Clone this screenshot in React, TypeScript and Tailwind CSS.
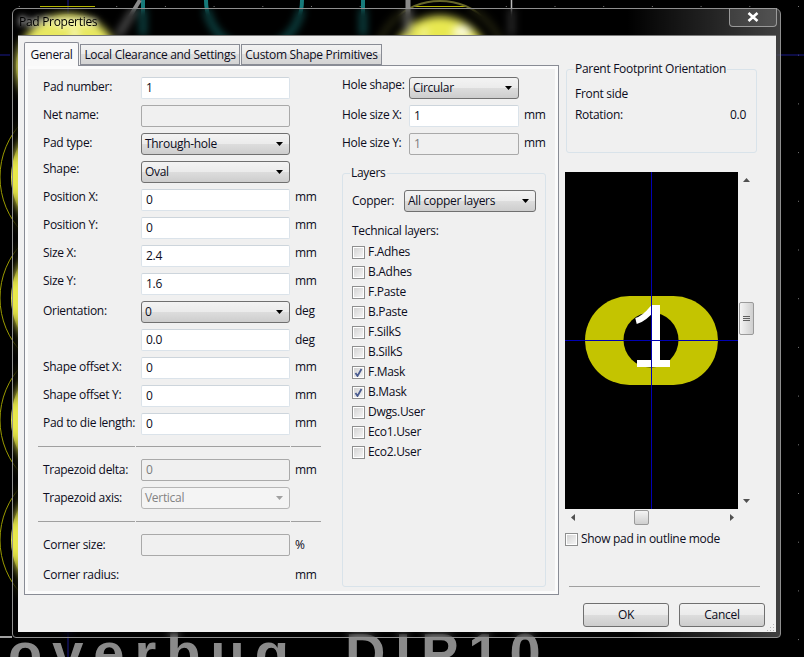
const FONT = "font-['Open_Sans',sans-serif] text-[12px] tracking-[-0.3px] text-[#0c0c20]";

function Arrow({ muted = false }: { muted?: boolean }) {
  return (
    <svg width="7" height="4" viewBox="0 0 7 4" className="shrink-0">
      <path d="M0 0H7L3.5 4Z" fill={muted ? "#a0a0a0" : "#000"} />
    </svg>
  );
}

function TextBox({ value = "", disabled = false }: { value?: string; disabled?: boolean }) {
  return (
    <div
      className={
        disabled
          ? "h-full w-full flex items-center px-[4px] rounded-[2px] border border-[#a9a9a9] bg-[#f0f0f0] text-[#7d7d7d]"
          : "h-full w-full flex items-center px-[4px] rounded-[2px] border border-[#dbe3ea] border-t-[#cdd5dc] bg-white"
      }
    >
      {value}
    </div>
  );
}

function Combo({ value, disabled = false }: { value: string; disabled?: boolean }) {
  return (
    <div
      className={
        disabled
          ? "h-full w-full flex items-center justify-between px-[3px] pr-[6px] rounded-[3px] border border-[#b5b5b5] bg-[#f4f4f4] text-[#838383]"
          : "h-full w-full flex items-center justify-between px-[3px] pr-[6px] rounded-[3px] border border-[#707070] bg-[linear-gradient(#f3f3f3,#ebebeb_50%,#dddddd_50%,#cdcdcd)]"
      }
    >
      <span>{value}</span>
      <Arrow muted={disabled} />
    </div>
  );
}

function Row({
  label,
  unit,
  labelWidth = "w-[98px]",
  controlWidth = "w-[149px]",
  lift = "-mt-[2px]",
  children,
}: {
  label?: string;
  unit?: string;
  labelWidth?: string;
  controlWidth?: string;
  lift?: string;
  children?: React.ReactNode;
}) {
  return (
    <div className="flex items-center h-[22px]">
      <div className={`${labelWidth} ${lift} shrink-0 whitespace-nowrap`}>{label}</div>
      <div className={`${controlWidth} h-full shrink-0`}>{children}</div>
      {unit && <div className={`ml-[5px] ${lift}`}>{unit}</div>}
    </div>
  );
}

function Separator() {
  return (
    <div className="flex -ml-[5px] gap-px w-[283px]">
      <div className="h-px w-[97px] bg-[#a0a0a0]" />
      <div className="h-px w-[154px] bg-[#a0a0a0]" />
      <div className="h-px flex-1 bg-[#a0a0a0]" />
    </div>
  );
}

function Check({ label, checked = false }: { label: string; checked?: boolean }) {
  return (
    <div className="flex items-center h-[20px] gap-[3px]">
      <div className="w-[13px] h-[13px] shrink-0 border border-[#8e8f8f] p-px bg-white">
        <div className="w-full h-full bg-gradient-to-br from-[#d4d4d4] to-[#f4f4f4] flex items-center justify-center">
          {checked && (
            <svg width="9" height="9" viewBox="0 0 9 9">
              <path d="M1.5 5 L3.5 8 L7.5 1" fill="none" stroke="#4a5c90" strokeWidth="1.8" />
            </svg>
          )}
        </div>
      </div>
      <span>{label}</span>
    </div>
  );
}

function Group({ title, className, children }: { title: string; className: string; children?: React.ReactNode }) {
  return (
    <div className={`relative border border-[#d9e3ea] rounded-[3px] ${className}`}>
      <span className="absolute -top-[10px] left-[7px] px-[1px] bg-[#f0f0f0] whitespace-nowrap">{title}</span>
      {children}
    </div>
  );
}

function Button({ label }: { label: string }) {
  return (
    <div className="w-[86px] h-[24px] flex items-center justify-center rounded-[3px] border border-[#707070] bg-[linear-gradient(#f3f3f3,#ebebeb_50%,#dddddd_50%,#cdcdcd)]">
      {label}
    </div>
  );
}

function Tab({ label, active = false, width }: { label: string; active?: boolean; width: string }) {
  return (
    <div
      className={
        active
          ? `${width} h-[24px] -mb-px z-10 flex items-center justify-center border border-[#898c95] border-b-0 bg-[#f9f9f9] rounded-t-[2px]`
          : `${width} h-[21px] flex items-center justify-center border border-[#898c95] bg-[linear-gradient(#f2f2f2,#ebebeb_50%,#dddddd_50%,#d4d4d4)]`
      }
    >
      {label}
    </div>
  );
}

function Backdrop() {
  const dots = Array.from({ length: 17 }, (_, i) => 798 - i * 48.7);
  const rows = Array.from({ length: 14 }, (_, i) => 6 + i * 48.7);
  return (
    <>
      <svg width="804" height="657" viewBox="0 0 804 657" className="absolute inset-0">
        <rect width="804" height="657" fill="#000" />
        {dots.map((x) => (
          <rect key={x} x={x} y="6" width="1" height="1" fill="#777" />
        ))}
        {rows.map((y) => (
          <rect key={y} x="798" y={y} width="1" height="1" fill="#777" />
        ))}
        <path d="M0 55H10M776 55H804" stroke="#1a1a8c" />
        <path d="M68 0V657" stroke="#1a1a8c" />
        <path d="M40 6.5H95M412 6.5H466" stroke="#b5b500" strokeWidth="1" />
        {[177, 298, 420, 540].map((y) => (
          <g key={y}>
            <circle cx="79" cy={y} r="68" fill="#e8e84a" />
            <circle cx="79" cy={y} r="79" fill="none" stroke="#9a9a00" />
          </g>
        ))}
        <circle cx="68" cy="66" r="52" fill="#e8e860" />
        <circle cx="440" cy="66" r="50" fill="#e8e850" />
        <circle cx="440" cy="66" r="65" fill="none" stroke="#66662a" strokeWidth="2" />
        <path d="M70 36 L74 26 L80 36Z" fill="#fff" />
        <path d="M420 36 L426 26 V36ZM452 36 A10 10 0 0 1 472 36Z" fill="#fff" />
        <path d="M143 0V36M363 0V36" stroke="#167a7a" strokeWidth="4" />
        <path d="M206 0 A48 50 0 0 0 302 0" fill="none" stroke="#167a7a" strokeWidth="4" />
        <path d="M140 0L118 36" stroke="#8a8a8a" strokeWidth="4" />
        <path d="M408 0V36" stroke="#8a8a8a" strokeWidth="5" />
        <path d="M511.5 0V36" stroke="#bbb" strokeWidth="1.5" />
        <path d="M0 637H12" stroke="#a0a0a0" strokeWidth="2" />
      </svg>
      <div className="absolute left-[8px] top-[621px] whitespace-nowrap font-['Liberation_Sans',sans-serif] font-bold text-[56px] leading-[64px] tracking-[10px] text-[#8a8a8a]">
        <span>overbug</span>
        <span className="ml-[46px]">DIP10</span>
      </div>
    </>
  );
}

function PadPreview() {
  return (
    <svg width="173" height="337" viewBox="0 0 173 337" className="block shrink-0">
      <rect width="173" height="337" fill="#000" />
      <rect x="20" y="124" width="133" height="89" rx="44.5" fill="#c4c400" />
      <circle cx="86" cy="168" r="27.5" fill="#000" />
      <path d="M71 149 Q79 147 88 136" fill="none" stroke="#fff" strokeWidth="6" />
      <path d="M90.5 133V190" stroke="#fff" strokeWidth="9" />
      <path d="M72 191.5H105" stroke="#fff" strokeWidth="7" />
      <path d="M86.5 0V337" stroke="#0000b4" />
      <path d="M0 168.5H173" stroke="#0000b4" />
    </svg>
  );
}

export default function App() {
  return (
    <div className={`relative w-[804px] h-[657px] overflow-hidden pt-[8px] pl-[12px] ${FONT}`}>
      <Backdrop />

      {/* dialog window */}
      <div className="relative w-[769px] h-[630px] flex flex-col rounded-[6px] rounded-b-[4px] border border-[#8f8f8f] backdrop-blur-[4px] bg-gradient-to-r from-transparent from-80% to-white/25">
        <div className="h-[26px] shrink-0 flex justify-between pl-[6px]">
          <span className="pt-[4px] text-black [text-shadow:0_0_5px_#fff,0_0_8px_#fff]">Pad Properties</span>
          <div className="w-[48px] h-[19px] mr-[3px] -mt-px flex items-center justify-center rounded-b-[4px] border border-t-0 border-[#9a9a9a] bg-white/10">
            <svg width="12" height="10" viewBox="0 0 12 10">
              <path d="M1.5 1 L10.5 9 M10.5 1 L1.5 9" stroke="#fff" strokeWidth="2.6" />
            </svg>
          </div>
        </div>

        <div className="relative ml-[5px] w-[758px] h-[597px] border-t border-[#7a7a7a] bg-[#f0f0f0] px-[6px] pt-[6px]">
          <div className="flex gap-[6px] h-[553px]">
            {/* notebook */}
            <div className="w-[535px] shrink-0 flex flex-col">
              <div className="flex items-end h-[23px] gap-px">
                <Tab label="General" active width="w-[55px]" />
                <Tab label="Local Clearance and Settings" width="w-[160px]" />
                <Tab label="Custom Shape Primitives" width="w-[141px]" />
              </div>
              <div className="flex-1 border border-[#898c95] shadow-[inset_0_0_0_3px_#fbfbfb] bg-[#f0f0f0] pt-[11px] pl-[18px] flex">
                <div className="w-[299px] shrink-0 flex flex-col gap-[6px]">
                  <Row label="Pad number:"><TextBox value="1" /></Row>
                  <Row label="Net name:"><TextBox disabled /></Row>
                  <Row label="Pad type:"><Combo value="Through-hole" /></Row>
                  <Row label="Shape:" lift="-mt-[6px]"><Combo value="Oval" /></Row>
                  <Row label="Position X:" unit="mm" lift="-mt-[6px]"><TextBox value="0" /></Row>
                  <Row label="Position Y:" unit="mm" lift="-mt-[6px]"><TextBox value="0" /></Row>
                  <Row label="Size X:" unit="mm" lift="-mt-[6px]"><TextBox value="2.4" /></Row>
                  <Row label="Size Y:" unit="mm" lift="-mt-[6px]"><TextBox value="1.6" /></Row>
                  <Row label="Orientation:" unit="deg"><Combo value="0" /></Row>
                  <Row unit="deg" lift="mt-0"><TextBox value="0.0" /></Row>
                  <Row label="Shape offset X:" unit="mm"><TextBox value="0" /></Row>
                  <Row label="Shape offset Y:" unit="mm"><TextBox value="0" /></Row>
                  <Row label="Pad to die length:" unit="mm"><TextBox value="0" /></Row>
                  <div className="mt-[5px] mb-[6px]"><Separator /></div>
                  <Row label="Trapezoid delta:" unit="mm" lift="mt-0"><TextBox value="0" disabled /></Row>
                  <Row label="Trapezoid axis:" lift="mt-0"><Combo value="Vertical" disabled /></Row>
                  <div className="mt-[6px] mb-[6px]"><Separator /></div>
                  <Row label="Corner size:" unit="%" lift="mt-0"><TextBox disabled /></Row>
                  <Row label="Corner radius:" unit="mm" lift="mt-[4px]" />
                </div>

                <div className="flex flex-col">
                  <div className="flex flex-col gap-[6px]">
                    <Row label="Hole shape:" labelWidth="w-[67px]" controlWidth="w-[110px]" lift="-mt-[6px]"><Combo value="Circular" /></Row>
                    <Row label="Hole size X:" unit="mm" labelWidth="w-[67px]" controlWidth="w-[110px]"><TextBox value="1" /></Row>
                    <Row label="Hole size Y:" unit="mm" labelWidth="w-[67px]" controlWidth="w-[110px]"><TextBox value="1" disabled /></Row>
                  </div>
                  <Group title="Layers" className="mt-[18px] w-[204px] h-[414px] pt-[16px] pl-[9px]">
                    <Row label="Copper:" labelWidth="w-[52px]" controlWidth="w-[132px]" lift="mt-0">
                      <Combo value="All copper layers" />
                    </Row>
                    <div className="mt-[9px] mb-px h-[20px] flex items-center">Technical layers:</div>
                    <Check label="F.Adhes" />
                    <Check label="B.Adhes" />
                    <Check label="F.Paste" />
                    <Check label="B.Paste" />
                    <Check label="F.SilkS" />
                    <Check label="B.SilkS" />
                    <Check label="F.Mask" checked />
                    <Check label="B.Mask" checked />
                    <Check label="Dwgs.User" />
                    <Check label="Eco1.User" />
                    <Check label="Eco2.User" />
                  </Group>
                </div>
              </div>
            </div>

            {/* right column */}
            <div className="flex-1 flex flex-col">
              <Group title="Parent Footprint Orientation" className="mt-[27px] ml-px w-[191px] h-[84px] shrink-0 pt-[14px] pl-[8px] pr-[10px]">
                <div className="h-[20px] flex items-center">Front side</div>
                <div className="h-[20px] mt-px flex items-center justify-between">
                  <span>Rotation:</span>
                  <span>0.0</span>
                </div>
              </Group>

              <div className="mt-[19px] flex">
                <PadPreview />
                <div className="w-[15px] h-[337px] ml-px bg-[#f0f0f0] flex flex-col items-center pt-[6px]">
                  <svg width="7" height="4" viewBox="0 0 7 4" className="shrink-0"><path d="M0 4H7L3.5 0Z" fill="#505050" /></svg>
                  <div className="mt-[120px] w-[15px] h-[33px] shrink-0 flex flex-col items-center justify-center gap-px rounded-[2px] border border-[#9a9a9a] bg-gradient-to-r from-[#f4f4f4] to-[#cfcfcf]">
                    <div className="w-[7px] h-px bg-[#606060]" />
                    <div className="w-[7px] h-px bg-[#606060]" />
                    <div className="w-[7px] h-px bg-[#606060]" />
                  </div>
                  <svg width="7" height="4" viewBox="0 0 7 4" className="shrink-0 mt-[164px]"><path d="M0 0H7L3.5 4Z" fill="#505050" /></svg>
                </div>
              </div>
              <div className="mt-px w-[173px] h-[15px] flex items-center pl-[6px]">
                <svg width="4" height="7" viewBox="0 0 4 7" className="shrink-0"><path d="M4 0V7L0 3.5Z" fill="#505050" /></svg>
                <div className="ml-[59px] w-[15px] h-[15px] shrink-0 rounded-[2px] border border-[#9a9a9a] bg-gradient-to-b from-[#f4f4f4] to-[#cfcfcf]" />
                <svg width="4" height="7" viewBox="0 0 4 7" className="shrink-0 ml-[81px]"><path d="M0 0V7L4 3.5Z" fill="#505050" /></svg>
              </div>

              <div className="mt-[4px]">
                <Check label="Show pad in outline mode" />
              </div>

              <div className="mt-auto mb-[8px] ml-[4px] w-[191px] h-px bg-[#a0a0a0]" />
            </div>
          </div>

          <div className="mt-[8px] flex justify-end gap-[10px] pr-[5px]">
            <Button label="OK" />
            <Button label="Cancel" />
          </div>

          {/* resize grip */}
          <svg width="8" height="8" viewBox="0 0 8 8" className="absolute right-[1px] bottom-[1px]">
            <path d="M6 1h1v1H6zM3 4h1v1H3zM6 4h1v1H6zM0 7h1v1H0zM3 7h1v1H3zM6 7h1v1H6z" fill="#b5b5b5" />
          </svg>
        </div>
      </div>
    </div>
  );
}
